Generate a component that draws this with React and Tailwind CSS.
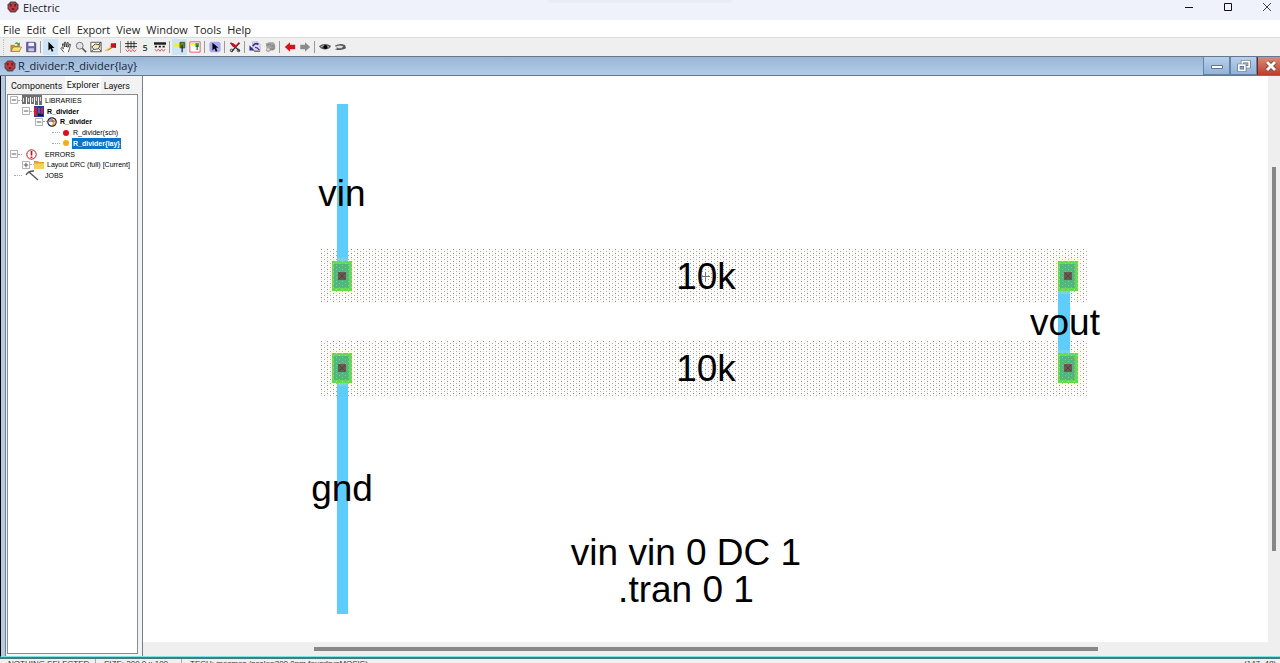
import React from "react";

const uiFont = "font-['Open_Sans','Noto_Sans',sans-serif]";

function Logo({ className }) {
  return (
    <svg className={className} viewBox="0 0 12 12" aria-hidden="true">
      <path d="M3.5 .5h5l3 3v4.500l-3 3.500h-5l-3-3.500V3.500z" fill="#5b4a4d" />
      <circle cx="6" cy="5.700" r="4.300" fill="#c9363c" />
      <path d="M3.800 3v2.500M8.200 3v2.500" stroke="#3a2528" strokeWidth="1.300" />
      <path d="M4.800 8.800V7.500Q6 6.300 7.200 7.500v1.300z" fill="#3a2528" />
    </svg>
  );
}

const icons = {
  open: (
    <>
      <path d="M1 5h4l1 1h5v6H1z" fill="#c99a28" stroke="#7d6424" strokeWidth=".6" />
      <path d="M1 12l3-5h9.500L11 12z" fill="#ffe27a" stroke="#7d6424" strokeWidth=".7" />
      <path d="M5 4Q7 0 10 2.500L11.500 1.500V5.500H8L9 4Q7 2.500 5 4z" fill="#4d9c3b" />
    </>
  ),
  save: (
    <>
      <path d="M2 1.500h9.500l1 1v10H2z" fill="#6b67ab" stroke="#3c3870" strokeWidth=".9" />
      <path d="M4 2h6.500v4H4z" fill="#f1f1fa" />
      <path d="M4 8.500h6.500v3.500H4z" fill="#c9c9e4" />
    </>
  ),
  arrow: <path d="M4 1v10l2.400-2.200L8 12.500l1.800-.8L8.200 8.200H11z" fill="#000" />,
  hand: (
    <path
      d="M4.500 13L1 8.500l1-.8L4 9 2.800 3.500l1.100-.4L5.500 7 5.200 1.500h1.300L7.400 7 8.400 1.700l1.200.2L9.200 7.400l2-3.900 1.100.5L11 9l-1.300 4"
      fill="#fff"
      stroke="#222"
      strokeWidth=".9"
    />
  ),
  zoom: (
    <>
      <circle cx="5.500" cy="5.500" r="4" fill="#dfe6ea" stroke="#666" />
      <path d="M8.500 8.500L13 13" stroke="#555" strokeWidth="1.800" />
    </>
  ),
  fit: (
    <>
      <path d="M1 1.500h12v11H1z" fill="#fff" stroke="#444" />
      <path d="M2 7l4-3.500 6 1-2 4.500-5 1z" fill="#fbe6b0" stroke="#333" />
      <path d="M1.500 12l3-2.500M10 9l3 3M10 4l3-2.500" stroke="#333" />
    </>
  ),
  wire: (
    <>
      <path d="M0 10.500l8-4.500v3l-8 3z" fill="#ecc94b" />
      <path d="M3 11l6-4" stroke="#9c7a2b" />
      <path d="M7 2.500h5.500v5.500H8L6.500 7z" fill="#d3101b" />
      <path d="M12 2.500V8" stroke="#630b10" />
    </>
  ),
  grid: (
    <>
      <path d="M3.500 0v9M7 0v9M10.500 0v9M0 3h14M0 6.500h14" stroke="#222" />
      <path d="M1 10l2 2.500 2-2.500 2 2.500 2-2.500 2 2.500 2-2.500" stroke="#d44" fill="none" />
    </>
  ),
  ruler: (
    <>
      <path d="M0 1.500h14v3H0zM1 5.500h2.500v2H1zM5.500 5.500H8v2H5.500zM10 5.500h2.500v2H10z" fill="#222" />
      <path d="M1 9.500l2 2.500 2-2.500 2 2.500 2-2.500 2 2.500 2-2.500" stroke="#d44" fill="none" />
    </>
  ),
  pin: (
    <>
      <path d="M0 3.500h7v3H0z" fill="#f5ef20" />
      <path d="M7 1.500h5.500V8H7z" fill="#5c8b22" stroke="#365414" />
      <path d="M9.500 5v8" stroke="#222" strokeWidth="1.400" />
    </>
  ),
  area: (
    <>
      <path d="M1 1h12v12H1z" fill="#fff" stroke="#e2475b" />
      <path d="M1.500 2.500h6v2.500h-6z" fill="#f4ee3a" />
      <path d="M7.500 2.500h4V7h-4z" fill="#25a035" />
      <path d="M9.500 5v5.500" stroke="#1b5d24" strokeWidth="1.300" />
    </>
  ),
  special: (
    <>
      <path d="M2 1h10l1.500 2v8L12 13H2L.5 11V3z" fill="#a9a8f0" />
      <path d="M4 2v9l2.400-2.200L8 12.500l1.800-.8L8.200 8H11z" fill="#000" />
    </>
  ),
  tools: (
    <>
      <path d="M2 2l10.500 10M12 2L3 12.500" stroke="#333" strokeWidth="1.500" />
      <path d="M1 2l4 .5L8 5l3.500-3.500L13 3 9 6.500 7 8 4 6.500z" fill="#c3131c" />
      <circle cx="11" cy="11" r="1.500" stroke="#333" />
      <circle cx="3" cy="11" r="1.500" stroke="#333" />
    </>
  ),
  undo: (
    <>
      <path d="M4 1h6l3 3v7H4z" fill="#dcdcee" stroke="#9a9abf" strokeWidth=".6" />
      <path d="M11 4Q7 1.500 4.500 6" stroke="#322c91" strokeWidth="2" />
      <path d="M.5 5v6h6z" fill="#322c91" />
      <path d="M7 7.500q3 0 5 3" stroke="#322c91" strokeWidth="1.500" />
      <path d="M6 12h7" stroke="#c6424c" strokeWidth="1.500" />
    </>
  ),
  redo: (
    <>
      <path d="M2 3l4-1.500h5L13 4v5l-2 2H8l-3 2-3-1.500 1-3z" fill="#a3a3a3" />
      <path d="M3 5Q7 2 9 6l2.500-1v4.500H7" stroke="#777" />
      <circle cx="5" cy="10" r="1.500" fill="#ddd" />
    </>
  ),
  back: <path d="M1 7l6-5.500v3h6v5H7v3z" fill="#d7141b" />,
  forward: <path d="M13 7L7 1.500v3H1.500v5H7v3z" fill="#8b8b8b" />,
  eye: (
    <>
      <path d="M0 6Q6 1.500 14 5.500L13 8Q8 11.500 2 8.500z" fill="#555" />
      <path d="M2 7q5-3.500 10 .5" stroke="#ccc" />
      <circle cx="7.500" cy="7" r="2.300" fill="#000" />
    </>
  ),
  eyeClosed: (
    <>
      <path d="M1 5.500Q7 2 13 5l1 3.500Q8 12 1 9.500l3-1z" fill="#555" />
      <path d="M2 6.500q5-2.500 9 0L8.500 8.500H5z" fill="#ddd" />
    </>
  ),
};

function Tool({ name, label, active }) {
  return (
    <button type="button" aria-label={label} className={`flex h-4 w-[15px] shrink-0 items-center justify-center ${active ? "bg-[#cde4f7]" : ""}`}>
      <svg viewBox="0 0 14 14" className="h-3 w-3" fill="none">
        {icons[name]}
      </svg>
    </button>
  );
}

function Sep() {
  return <span className="mx-0.5 h-3 w-px shrink-0 bg-[#9a9a9a]" />;
}

function Toggle({ plus }) {
  return (
    <svg viewBox="0 0 9 9" className="h-2 w-2 shrink-0" aria-hidden="true">
      <path d="M.5 .5h8v8h-8z" fill="#fff" stroke="#a5a5a5" />
      <path d={plus ? "M2 4.500h5M4.500 2v5" : "M2 4.500h5"} stroke="#444" />
    </svg>
  );
}

function Guide({ className }) {
  return <span className={`h-px shrink-0 border-t border-dotted border-[#aaa] ${className}`} />;
}

const rowClass = "flex min-h-0 items-center whitespace-nowrap";

function Explorer() {
  return (
    <div className="mx-px flex-1 overflow-hidden border border-[#8c8c8c] bg-white pl-0.5">
      <ul className="grid h-[86px] grid-rows-8 text-[7px] leading-none text-black font-['Liberation_Sans',sans-serif]">
        <li className={rowClass}>
          <Toggle />
          <Guide className="w-1" />
          <svg viewBox="0 0 20 10" className="mr-[3px] h-[10px] w-5 shrink-0">
            <path d="M0 0h20v2H0zM0 0h4v9H0zM5 1h3v8H5zM9 1h3v8H9zM13 0h3v10h-3zM17 0h3v10h-3z" fill="#6f6f6f" />
            <path d="M1 3h1v4H1zM6 3h1v4H6zM10 3h1v4h-1zM14 2h1v4h-1zM18 2h1v4h-1z" fill="#ddd" />
          </svg>
          LIBRARIES
        </li>
        <li className={`${rowClass} pl-3 font-bold`}>
          <Toggle />
          <Guide className="w-1" />
          <svg viewBox="0 0 10 11" className="mr-[3px] h-[11px] w-[10px] shrink-0">
            <path d="M0 0h10v11H0z" fill="#283a9a" />
            <path d="M0 1h3v9H0z" fill="#d41d2a" />
            <path d="M4 2h2v5H4z" fill="#6a4fb0" />
            <path d="M7 2l2-1v8H7z" fill="#b42a45" />
            <path d="M4 8h5v2H4z" fill="#171c3b" />
          </svg>
          R_divider
        </li>
        <li className={`${rowClass} pl-[25px] font-bold`}>
          <Toggle />
          <Guide className="w-1" />
          <svg viewBox="0 0 10 10" className="mr-[3px] h-[10px] w-[10px] shrink-0">
            <circle cx="5" cy="5" r="4.200" fill="#fff" stroke="#222" strokeWidth="1.200" />
            <path d="M1.500 5Q2 2 5 1.500V5z" fill="#7f95d8" />
            <path d="M5 2l3 2-1 2-2-1z" fill="#e4572e" />
            <path d="M5 8l1-3 2 1-1 2z" fill="#e6b12e" />
          </svg>
          R_divider
        </li>
        <li className={`${rowClass} pl-[42px]`}>
          <Guide className="w-2" />
          <span className="mx-[3px] h-[6px] w-[6px] shrink-0 rounded-full bg-[#e30b17]" />
          <span className="px-px">R_divider(sch)</span>
        </li>
        <li className={`${rowClass} pl-[42px]`}>
          <Guide className="w-2" />
          <span className="mx-[3px] h-[6px] w-[6px] shrink-0 rounded-full bg-[#eeb11d]" />
          <span className="bg-[#0a74cb] px-px py-0.5 font-bold text-white">R_divider{"{lay}"}</span>
        </li>
        <li className={rowClass}>
          <Toggle />
          <Guide className="mr-1 w-1" />
          <svg viewBox="0 0 11 11" className="mr-2 h-[11px] w-[11px] shrink-0">
            <circle cx="5.500" cy="5.500" r="4.700" fill="#fff" stroke="#b81620" />
            <path d="M5.500 2v4.500M5.500 7.500v1.500" stroke="#d1101b" strokeWidth="1.700" />
          </svg>
          ERRORS
        </li>
        <li className={`${rowClass} pl-3`}>
          <Toggle plus />
          <Guide className="w-1" />
          <svg viewBox="0 0 10 9" className="mr-[3px] h-[9px] w-[10px] shrink-0">
            <path d="M0 1h4l1 1h5v7H0z" fill="#e0a32a" />
            <path d="M0 3.500h10V9H0z" fill="#fbcf5c" />
          </svg>
          Layout DRC (full) [Current]
        </li>
        <li className={`${rowClass} pl-1`}>
          <Guide className="mr-0.5 w-2" />
          <svg viewBox="0 0 14 11" className="mr-[5px] h-[11px] w-4 shrink-0" fill="none">
            <path d="M1 5Q3 1 9 1M4 2l9 8" stroke="#555" strokeWidth="1.300" />
          </svg>
          JOBS
        </li>
      </ul>
    </div>
  );
}

function Contact({ x, y }) {
  return (
    <g>
      <rect x={x - 3} y={y - 3} width="26" height="36" fill="#f5f56a" opacity=".15" />
      <rect x={x} y={y} width="20" height="30" fill="#68d955" />
      <rect x={x + 2} y={y + 3} width="15" height="24" fill="#51b57c" />
      <rect x={x} y={y} width="20" height="30" fill="url(#dots)" opacity=".35" />
      <rect x={x + 6} y={y + 11} width="8" height="8" fill="#6b5a52" />
      <path d={`M${x + 7} ${y + 12}l6 6m0-6l-6 6`} stroke="#4c3a38" strokeWidth=".7" />
    </g>
  );
}

function Layout() {
  return (
    <svg className="block h-full w-full" role="img" aria-label="R_divider layout">
      <defs>
        <pattern id="dots" x="178" y="173" width="6" height="4" patternUnits="userSpaceOnUse">
          <path d="M0 0h1v1H0z" fill="#95867f" />
          <path d="M3 2h1v1H3z" fill="#b3a49a" />
          <path d="M3 0h1v1H3z" fill="#f7efe0" />
          <path d="M0 2h1v1H0z" fill="#e9dfda" />
        </pattern>
      </defs>
      <rect x="178" y="173" width="768" height="54" fill="url(#dots)" />
      <rect x="178" y="264" width="768" height="56" fill="url(#dots)" />
      <rect x="194" y="28" width="11" height="164" fill="#5fcdfb" />
      <rect x="194" y="300" width="11" height="238" fill="#5fcdfb" />
      <rect x="915" y="190" width="12" height="104" fill="#5fcdfb" />
      <Contact x={189} y={185} />
      <Contact x={189} y={277} />
      <Contact x={915} y={185} />
      <Contact x={915} y={277} />
      <g fontSize="37" textAnchor="middle" fill="#000" className="font-['Liberation_Sans',sans-serif]">
        <text x="199" y="130">vin</text>
        <text x="563" y="213">10k</text>
        <text x="922" y="259">vout</text>
        <text x="563" y="305">10k</text>
        <text x="199" y="425">gnd</text>
        <text x="543" y="489">vin vin 0 DC 1</text>
        <text x="543" y="526">.tran 0 1</text>
      </g>
      <path d="M558 200.500h9M562.500 196v9" stroke="#777" strokeWidth="1" />
    </svg>
  );
}

const innerButton = "flex w-[27px] items-center justify-center border border-t-0 border-[#6683a5]";

export default function App() {
  return (
    <div className={`flex h-screen flex-col overflow-hidden bg-white text-[12px] text-[#222] ${uiFont}`}>
      <header className="relative flex h-5 shrink-0 items-start bg-[#eff2fa] pl-[7px]">
        <span className="absolute left-1/2 top-0 h-0.5 w-[184px] -translate-x-1/2 bg-[#e5e7ef] blur-[1px]" />
        <Logo className="mt-px h-3 w-3" />
        <h1 className="ml-1 flex-1 text-[11px] leading-4">Electric</h1>
        <div className="flex h-4 items-center gap-[29px]">
          <button type="button" aria-label="Minimize">
            <svg viewBox="0 0 10 12" className="h-3 w-[10px]"><path d="M1 5.500h8" stroke="#111" /></svg>
          </button>
          <button type="button" aria-label="Maximize">
            <svg viewBox="0 0 10 12" className="h-3 w-[10px]" fill="none"><path d="M1.500 1.500h7v7h-7z" stroke="#111" /></svg>
          </button>
          <button type="button" aria-label="Close" className="pr-2">
            <svg viewBox="0 0 10 12" className="h-3 w-[10px]"><path d="M1 1l8 8M9 1l-8 8" stroke="#444" /></svg>
          </button>
        </div>
      </header>

      <nav className="flex h-[18px] shrink-0 items-center gap-1.5 border-b border-[#dcdcdc] bg-white pl-[3px] pt-px text-[11px] leading-none">
        <button type="button">File</button>
        <button type="button">Edit</button>
        <button type="button">Cell</button>
        <button type="button">Export</button>
        <button type="button">View</button>
        <button type="button">Window</button>
        <button type="button">Tools</button>
        <button type="button">Help</button>
      </nav>

      <div role="toolbar" aria-label="Tools" className="flex h-[18px] shrink-0 items-center bg-[#efefef] pl-[3px]">
        <span className="mr-1 h-4 w-px border-l border-dotted border-[#bbb]" />
        <Tool name="open" label="Open library" />
        <Tool name="save" label="Save library" />
        <Sep />
        <Tool name="arrow" label="Select" active />
        <Tool name="hand" label="Pan" />
        <Tool name="zoom" label="Zoom" />
        <Tool name="fit" label="Outline" />
        <Tool name="wire" label="Measure" />
        <Sep />
        <Tool name="grid" label="Grid" />
        <button type="button" aria-label="Grid size 5" className="w-[14px] text-center text-[9px] font-semibold leading-none text-[#29405c]">5</button>
        <Tool name="ruler" label="Alignment" />
        <Sep />
        <Tool name="pin" label="Select objects" active />
        <Tool name="area" label="Select area" />
        <Sep />
        <Tool name="special" label="Special select" />
        <Sep />
        <Tool name="tools" label="Preferences" />
        <Sep />
        <Tool name="undo" label="Undo" />
        <Tool name="redo" label="Redo" />
        <Sep />
        <Tool name="back" label="Back" />
        <Tool name="forward" label="Forward" />
        <Sep />
        <Tool name="eye" label="Expand" />
        <Tool name="eyeClosed" label="Unexpand" />
      </div>

      <div className="flex h-5 shrink-0 items-stretch border-y border-[#66788f] bg-linear-to-b from-[#9ab6d5] to-[#b3cde9] pl-1">
        <Logo className="mt-[3px] h-3 w-3" />
        <h2 className="ml-0.5 flex-1 text-[11px] leading-[18px] text-[#17263a]">R_divider:R_divider{"{lay}"}</h2>
        <button type="button" aria-label="Minimize cell window" className={`${innerButton} bg-linear-to-b from-[#b8d0ea] to-[#93b3d8]`}>
          <svg viewBox="0 0 12 12" className="h-3 w-3"><path d="M.5 5.500h11v3H.5z" fill="#fff" stroke="#65748a" /></svg>
        </button>
        <button type="button" aria-label="Restore cell window" className={`${innerButton} bg-linear-to-b from-[#b8d0ea] to-[#93b3d8]`}>
          <svg viewBox="0 0 16 14" className="h-3 w-[14px]" fill="none">
            <path d="M6 2h8v6H6z" stroke="#5c6b80" strokeWidth="3.500" />
            <path d="M6 2h8v6H6z" stroke="#fff" strokeWidth="2" />
            <path d="M2 6h7v6H2z" fill="#8ba8ca" stroke="#5c6b80" strokeWidth="3.500" />
            <path d="M2 6h7v6H2z" stroke="#fff" strokeWidth="2" />
          </svg>
        </button>
        <button type="button" aria-label="Close cell window" className="flex w-[23px] items-center justify-center border-l border-[#6b2a28] bg-linear-to-b from-[#d98a7c] to-[#bd3a27] pl-[3px]">
          <svg viewBox="0 0 14 12" className="h-3 w-[14px]">
            <path d="M3 2l8 8M11 2l-8 8" stroke="#6d3a3a" strokeWidth="4.500" />
            <path d="M3 2l8 8M11 2l-8 8" stroke="#fff" strokeWidth="3" />
          </svg>
        </button>
      </div>

      <main className="flex min-h-0 flex-1 border-b border-l border-b-[#7fe3ee] border-l-black">
        <div className="w-1 shrink-0 bg-[#b4cbe6]" />
        <aside className="flex w-[138px] shrink-0 flex-col border-l border-r border-[#75808f] bg-[#f2f2f2] pb-0.5 pr-[3px]">
          <div role="tablist" className="flex h-[18px] shrink-0 items-center justify-between pl-[5px] pr-[9px] text-[9px] leading-none text-[#111] font-['Roboto',sans-serif]">
            <button type="button" role="tab" aria-selected="false" className="pt-0.5">Components</button>
            <button type="button" role="tab" aria-selected="true" className="h-full bg-[#fafafa] px-0.5">Explorer</button>
            <button type="button" role="tab" aria-selected="false" className="pt-0.5">Layers</button>
          </div>
          <Explorer />
        </aside>
        <section className="flex min-w-0 flex-1 flex-col bg-[#efefef]">
          <div className="flex min-h-0 flex-1">
            <div className="min-w-0 flex-1 bg-white">
              <Layout />
            </div>
            <div className="flex w-3 shrink-0 flex-col items-center">
              <div className="h-[16%] shrink-0" />
              <div className="h-[68%] w-1 bg-[#878787]" />
            </div>
          </div>
          <div className="flex h-[14px] shrink-0 items-center">
            <div className="w-[15%] shrink-0" />
            <div className="h-1 w-[69%] bg-[#878787]" />
          </div>
        </section>
      </main>

      <footer className="flex h-[6px] shrink-0 items-start overflow-hidden border-t-2 border-[#55757c] bg-[#f0f0ee] pl-2 text-[8px] leading-[10px] text-[#333] font-['Liberation_Sans',sans-serif]">
        <span className="w-[88px] shrink-0 whitespace-nowrap border-r border-[#aaa]">NOTHING SELECTED</span>
        <span className="w-[86px] shrink-0 whitespace-nowrap border-r border-[#aaa] pl-2">SIZE: 200.0 x 100</span>
        <span className="flex-1 whitespace-nowrap pl-2">TECH: mocmos (scale=200.0nm,foundry=MOSIS)</span>
        <span className="whitespace-nowrap pr-1">(147, 48)</span>
      </footer>
    </div>
  );
}
